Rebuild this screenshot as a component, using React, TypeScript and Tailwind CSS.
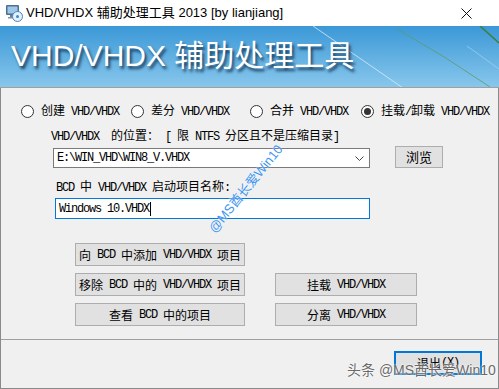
import React from "react";

const CJK = /([\u2e80-\u9fff\uff00-\uffef\u3000-\u303f]+)/;

function M({ s }: { s: string }) {
  const parts = s.split(CJK);
  return (
    <>
      {parts.map((p, i) =>
        p === "" ? null : i % 2 === 1 ? (
          <span key={i} className="font-['Noto_Sans_CJK_SC'] text-[12px]">
            {p}
          </span>
        ) : (
          <span
            key={i}
            className="font-['Liberation_Mono'] text-[12px] tracking-[-1.2px] whitespace-pre"
          >
            {p}
          </span>
        )
      )}
    </>
  );
}

function Radio({ label, checked, w }: { label: string; checked?: boolean; w: string }) {
  return (
    <div className={`flex items-center ${w}`}>
      <div className="w-[13px] h-[13px] rounded-full border border-[#333] bg-white flex items-center justify-center shrink-0">
        {checked && <div className="w-[7px] h-[7px] rounded-full bg-[#333]" />}
      </div>
      <div className="ml-[7px] leading-[16px] text-black whitespace-nowrap">
        <M s={label} />
      </div>
    </div>
  );
}

function Btn({ label, w }: { label: string; w: string }) {
  return (
    <div
      className={`${w} h-[23px] bg-[#e1e1e1] border border-[#adadad] flex items-center justify-center leading-[16px] text-black whitespace-nowrap`}
    >
      <M s={label} />
    </div>
  );
}

export default function App() {
  return (
    <div className="w-[499px] h-[389px] bg-[#f0f0f0] relative overflow-hidden font-['Liberation_Sans','Noto_Sans_CJK_SC',sans-serif]">
      {/* Title bar */}
      <div className="h-[26px] bg-white flex items-center relative">
        <svg className="ml-[5px]" width="18" height="18" viewBox="0 0 18 18">
          <rect x="1" y="1" width="13" height="10" rx="1" fill="#4f6f92" />
          <rect x="2.5" y="2.5" width="10" height="7" fill="#9fc7ea" />
          <rect x="5" y="11" width="5" height="2" fill="#6a8098" />
          <rect x="3" y="13" width="9" height="1.5" fill="#7f93a8" />
          <circle cx="12.5" cy="12.5" r="5" fill="#e6f1fb" stroke="#3f86cc" strokeWidth="1" />
          <circle cx="12.5" cy="12.5" r="1.5" fill="#3f86cc" />
        </svg>
        <div className="ml-[3px] text-[13px] text-black leading-[18px] whitespace-nowrap">
          VHD/VHDX 辅助处理工具 2013 [by lianjiang]
        </div>
        <svg className="absolute left-[461px] top-[8px]" width="11" height="11" viewBox="0 0 11 11">
          <path d="M0.5 0.5 L10.5 10.5 M10.5 0.5 L0.5 10.5" stroke="#111" strokeWidth="1" />
        </svg>
      </div>

      {/* Banner */}
      <div className="h-[61px] relative bg-[linear-gradient(to_bottom,#3b98d7,#88c7ec)] flex items-center pl-[11px] pb-[1px] overflow-hidden">
        <svg className="absolute left-0 top-0" width="499" height="61" viewBox="0 0 499 61">
          <path d="M313 0 L403 62" stroke="#d8ecf8" strokeWidth="1" opacity="0.8" />
          <path d="M397 3 Q445 30 490 61" stroke="#5e9a6a" strokeWidth="1" fill="none" opacity="0.8" />
          <path d="M480 0 L499 17" stroke="#3f7f3a" strokeWidth="1.6" />
          <path d="M467 20 L499 43" stroke="#a8d4ee" strokeWidth="1" opacity="0.7" />
        </svg>
        <div className="relative text-white text-[30px] leading-[36px] whitespace-nowrap [text-shadow:2px_3px_3px_rgba(10,40,70,0.85)]">
          VHD/VHDX 辅助处理工具
        </div>
      </div>
      <div className="h-px bg-[#a0a0a0]" />

      {/* Body */}
      <div className="h-[301px] border-x border-b border-[#8a8a8a] flex flex-col">
        <div className="mt-[15px] h-[16px] flex items-center pl-[20px]">
          <Radio label="创建 VHD/VHDX" w="w-[110px]" />
          <Radio label="差分 VHD/VHDX" w="w-[119px]" />
          <Radio label="合并 VHD/VHDX" w="w-[111px]" />
          <Radio label="挂载/卸载 VHD/VHDX" w="w-auto" checked />
        </div>

        <div className="mt-[8px] ml-[50px] h-[16px] leading-[16px] whitespace-nowrap text-black">
          <M s="VHD/VHDX  的位置： [ 限 NTFS 分区且不是压缩目录]" />
        </div>

        <div className="mt-[3px] h-[22px] flex items-end">
          <div className="ml-[52px] w-[317px] h-[20px] bg-white border border-[#7a7a7a] flex items-center pl-[3px] relative leading-[16px]">
            <M s="E:\WIN_VHD\WIN8_V.VHDX" />
            <svg className="absolute right-[5px] top-[7px]" width="9" height="5" viewBox="0 0 9 5">
              <path d="M0.5 0.5 L4.5 4.5 L8.5 0.5" stroke="#444" strokeWidth="1" fill="none" />
            </svg>
          </div>
          <div className="ml-[25px] w-[48px] h-[22px] bg-[#e1e1e1] border border-[#adadad] flex items-center justify-center font-['Noto_Sans_CJK_SC'] text-[13px] leading-[16px] text-black">
            浏览
          </div>
        </div>

        <div className="mt-[10px] ml-[55px] h-[16px] leading-[16px] whitespace-nowrap text-black">
          <M s="BCD 中 VHD/VHDX 启动项目名称:" />
        </div>

        <div className="mt-[4px] ml-[54px] w-[315px] h-[21px] bg-white border border-[#0078d7] flex items-center pl-[3px] leading-[16px]">
          <M s="Windows 10.VHDX" />
          <div className="w-px h-[14px] bg-black ml-[1px]" />
        </div>

        <div className="mt-[24px] flex">
          <div className="ml-[74px] flex flex-col gap-[7px]">
            <Btn label="向 BCD 中添加 VHD/VHDX 项目" w="w-[170px]" />
            <Btn label="移除 BCD 中的 VHD/VHDX 项目" w="w-[170px]" />
            <Btn label="查看 BCD 中的项目" w="w-[170px]" />
          </div>
          <div className="ml-[30px] pt-[30px] flex flex-col gap-[7px]">
            <Btn label="挂载 VHD/VHDX" w="w-[142px]" />
            <Btn label="分离 VHD/VHDX" w="w-[142px]" />
          </div>
        </div>

        <div className="mt-[13px] h-px bg-[#a0a0a0]" />

        <div className="mt-[11px] ml-[393px] w-[88px] h-[24px] bg-[#e1e1e1] border-2 border-[#0078d7] flex items-center justify-center leading-[16px] text-black">
          <M s="退出(X)" />
        </div>
      </div>

      {/* Watermarks */}
      <div className="absolute left-[246px] top-[189px] -translate-x-1/2 -translate-y-1/2 -rotate-[51deg] whitespace-nowrap text-[13px] leading-[16px] text-[#3d95f0] [text-shadow:0_0_1px_#ffffff]">
        @MS酋长爱Win10
      </div>
      <div className="absolute left-[347px] top-[361px] whitespace-nowrap text-[14px] leading-[18px] text-[#6a6a6a] [text-shadow:0_0_2px_#ffffff,0_0_2px_#ffffff]">
        头条 @MS酋长爱Win10
      </div>
    </div>
  );
}
